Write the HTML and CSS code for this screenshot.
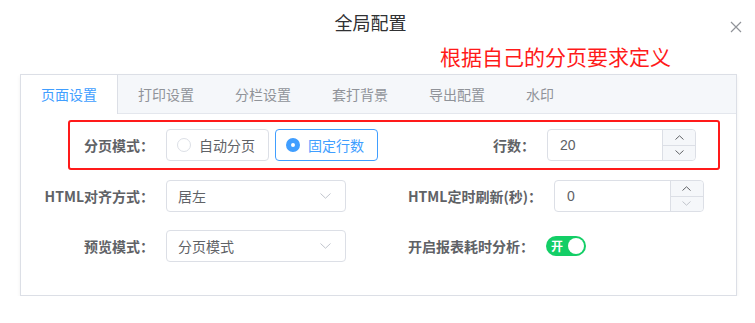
FILE: index.html
```html
<!DOCTYPE html>
<html lang="zh-CN">
<head>
  <meta charset="UTF-8">
  <title>全局配置</title>
  <link rel="stylesheet" href="styles.css">
</head>
<body>
  <div class="dialog">
    <div class="dialog-header">
      <span class="dialog-title">全局配置</span>
      <svg class="dialog-close" width="12" height="12" viewBox="0 0 12 12">
        <path d="M1 1 L11 11 M11 1 L1 11" stroke="#909399" stroke-width="1.2" fill="none"/>
      </svg>
    </div>
    <div class="note">根据自己的分页要求定义</div>

    <div class="tabs">
      <div class="tabs-header">
        <div class="tab active">页面设置</div>
        <div class="tab">打印设置</div>
        <div class="tab">分栏设置</div>
        <div class="tab">套打背景</div>
        <div class="tab">导出配置</div>
        <div class="tab">水印</div>
      </div>

      <div class="tabs-body">
        <!-- 分页 -->
        <div class="row row-marked">
          <div class="col col-left-marked">
            <label class="label label-marked">分页模式：</label>
            <div class="radio-group">
              <label class="radio">
                <span class="radio-dot"></span>
                <span>自动分页</span>
              </label>
              <label class="radio checked">
                <span class="radio-dot"></span>
                <span>固定行数</span>
              </label>
            </div>
          </div>
          <div class="col">
            <label class="label">行数：</label>
            <div class="number num-short">
              <span class="number-value">20</span>
              <div class="number-ctrl">
                <span class="step">
                  <svg width="9" height="5" viewBox="0 0 9 5"><path d="M0.5 4.5 L4.5 0.8 L8.5 4.5" stroke="#606266" fill="none"/></svg>
                </span>
                <span class="step">
                  <svg width="9" height="5" viewBox="0 0 9 5"><path d="M0.5 0.5 L4.5 4.2 L8.5 0.5" stroke="#606266" fill="none"/></svg>
                </span>
              </div>
            </div>
          </div>
        </div>

        <div class="row">
          <div class="col col-left">
            <label class="label label-left">HTML对齐方式：</label>
            <div class="select">
              <span>居左</span>
              <svg width="11" height="6" viewBox="0 0 11 6"><path d="M0.5 0.5 L5.5 5.2 L10.5 0.5" stroke="#c0c4cc" fill="none"/></svg>
            </div>
          </div>
          <div class="col">
            <label class="label">HTML定时刷新(秒)：</label>
            <div class="number">
              <span class="number-value">0</span>
              <div class="number-ctrl">
                <span class="step">
                  <svg width="9" height="5" viewBox="0 0 9 5"><path d="M0.5 4.5 L4.5 0.8 L8.5 4.5" stroke="#606266" fill="none"/></svg>
                </span>
                <span class="step disabled">
                  <svg width="9" height="5" viewBox="0 0 9 5"><path d="M0.5 0.5 L4.5 4.2 L8.5 0.5" stroke="#c0c4cc" fill="none"/></svg>
                </span>
              </div>
            </div>
          </div>
        </div>

        <div class="row">
          <div class="col col-left">
            <label class="label label-left">预览模式：</label>
            <div class="select">
              <span>分页模式</span>
              <svg width="11" height="6" viewBox="0 0 11 6"><path d="M0.5 0.5 L5.5 5.2 L10.5 0.5" stroke="#c0c4cc" fill="none"/></svg>
            </div>
          </div>
          <div class="col">
            <label class="label">开启报表耗时分析：</label>
            <div class="switch">
              <span class="switch-text">开</span>
              <span class="switch-knob"></span>
            </div>
          </div>
        </div>
      </div>
    </div>
  </div>
</body>
</html>
```

FILE: styles.css
```css
body {
  margin: 0;
  font-family: "Liberation Sans", "Noto Sans CJK SC", sans-serif;
  background: #fff;
  color: #606266;
}
.dialog {
  width: 755px;
}
.dialog-header {
  position: relative;
  height: 42px;
  padding-top: 16px;
  box-sizing: border-box;
  text-align: center;
}
.dialog-title {
  font-family: "Noto Sans CJK SC", sans-serif;
  font-size: 18px;
  line-height: 24px;
  color: #303133;
  display: inline-block;
  margin-top: -12px;
  margin-left: -14px;
}
.dialog-close {
  position: absolute;
  right: 13px;
  top: 21px;
}
.note {
  height: 28px;
  line-height: 28px;
  margin-bottom: 4px;
  padding-left: 440px;
  font-family: "Noto Sans CJK SC", sans-serif;
  font-size: 21px;
  color: #ff1a1a;
}
.tabs {
  margin: 0 18px 0 20px;
  border: 1px solid #dcdfe6;
  box-shadow: 0 2px 4px 0 rgba(0, 0, 0, 0.06);
}
.tabs-header {
  display: flex;
  height: 38px;
  background: #f5f7fa;
  border-bottom: 1px solid #e4e7ed;
}
.tab {
  padding: 0 20px;
  line-height: 38px;
  font-family: "Noto Sans CJK SC", sans-serif;
  font-size: 14px;
  color: #909399;
  border-right: 1px solid transparent;
}
.tab.active {
  color: #409eff;
  background: #fff;
  border-right-color: #dcdfe6;
  height: 39px;
}
.tabs-body {
  padding: 6px 0 24px;
}
.row {
  display: flex;
  align-items: center;
  height: 50px;
}
.row-marked {
  margin: 0 16px 1px 47px;
  border: 2px solid #ff1a1a;
  border-radius: 3px;
  box-sizing: border-box;
}
.col {
  display: flex;
  align-items: center;
}
.col-left {
  width: 387px;
}
.col-left-marked {
  width: 423px;
}
.label {
  padding-right: 12px;
  font-family: "Noto Sans CJK SC", sans-serif;
  font-size: 14px;
  font-weight: bold;
  color: #606266;
  white-space: nowrap;
}
.label-left {
  width: 133px;
  text-align: right;
}
.label-marked {
  width: 84px;
  text-align: right;
}
.radio-group {
  display: flex;
  gap: 6px;
}
.radio {
  display: flex;
  align-items: center;
  height: 32px;
  box-sizing: border-box;
  padding: 0 13px 0 10px;
  border: 1px solid #dcdfe6;
  border-radius: 4px;
  font-family: "Noto Sans CJK SC", sans-serif;
  font-size: 14px;
  color: #606266;
}
.radio-dot {
  width: 14px;
  height: 14px;
  box-sizing: border-box;
  border: 1px solid #dcdfe6;
  border-radius: 50%;
  margin-right: 8px;
  background: #fff;
}
.radio.checked {
  border-color: #409eff;
  color: #409eff;
}
.radio.checked .radio-dot {
  border: 5px solid #409eff;
  background: #fff;
}
.number {
  display: flex;
  width: 150px;
  height: 32px;
  box-sizing: border-box;
  border: 1px solid #dcdfe6;
  border-radius: 4px;
}
.num-short {
  width: 149px;
}
.number-value {
  flex: 1;
  padding-left: 12px;
  line-height: 30px;
  font-size: 14px;
  color: #606266;
}
.number-ctrl {
  width: 32px;
  display: flex;
  flex-direction: column;
  border-left: 1px solid #dcdfe6;
  background: #f5f7fa;
  border-radius: 0 4px 4px 0;
}
.step {
  flex: 1;
  display: flex;
  align-items: center;
  justify-content: center;
}
.step + .step {
  border-top: 1px solid #dcdfe6;
}
.select {
  display: flex;
  align-items: center;
  justify-content: space-between;
  width: 180px;
  height: 32px;
  box-sizing: border-box;
  padding: 0 14px 0 11px;
  border: 1px solid #dcdfe6;
  border-radius: 4px;
  font-family: "Noto Sans CJK SC", sans-serif;
  font-size: 14px;
  color: #606266;
}
.switch {
  position: relative;
  width: 40px;
  height: 20px;
  border-radius: 10px;
  background: #13ce66;
}
.switch-text {
  position: absolute;
  left: 5px;
  top: 0;
  line-height: 20px;
  font-family: "Noto Sans CJK SC", sans-serif;
  font-size: 12px;
  font-weight: bold;
  color: #fff;
}
.switch-knob {
  position: absolute;
  right: 2px;
  top: 2px;
  width: 16px;
  height: 16px;
  border-radius: 50%;
  background: #fff;
}
```
